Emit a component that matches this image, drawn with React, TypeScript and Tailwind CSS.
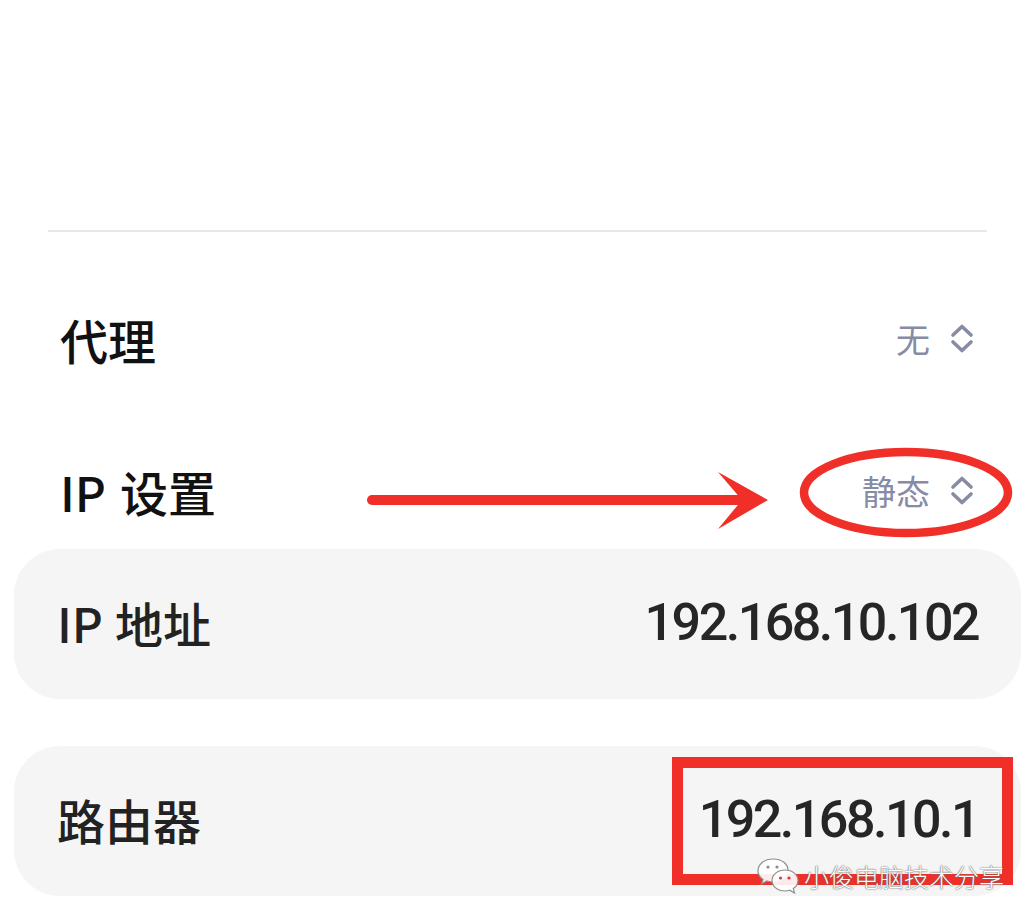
import React from "react";

const cjk = "font-['Noto_Sans_CJK_SC','Noto_Sans',sans-serif]";

function UpDown() {
  return (
    <svg width="24" height="30" viewBox="0 0 24 30" fill="none" className="shrink-0">
      <path d="M3 11 L12 2.5 L21 11" stroke="#878ba4" strokeWidth="3.6" strokeLinecap="round" strokeLinejoin="round" />
      <path d="M3 18 L12 26.5 L21 18" stroke="#878ba4" strokeWidth="3.6" strokeLinecap="round" strokeLinejoin="round" />
    </svg>
  );
}

function SelectRow({ label, value }: { label: React.ReactNode; value: string }) {
  return (
    <div className="flex h-[80px] items-center justify-between pl-[60px] pr-[61px]">
      <div className={`${cjk} text-[48px] font-medium leading-none text-[#111111]`}>{label}</div>
      <div className="flex items-center gap-[20px]">
        <span className={`${cjk} text-[34px] leading-none text-[#878ba4]`}>{value}</span>
        <UpDown />
      </div>
    </div>
  );
}

function Card({ label, value }: { label: React.ReactNode; value: string }) {
  return (
    <div className="mx-[14px] flex h-[150px] items-center justify-between rounded-[46px] bg-[#f5f5f5] pl-[43px] pr-[43px]">
      <div className={`${cjk} -mt-[4px] text-[48px] font-medium leading-none text-[#222222]`}>{label}</div>
      <div className="-mt-[2px] font-['Roboto','Noto_Sans',sans-serif] text-[52px] font-medium leading-none tracking-[-2.5px] text-[#262626]">
        {value}
      </div>
    </div>
  );
}

function WeChatIcon() {
  return (
    <svg width="46" height="40" viewBox="0 0 46 40" fill="none">
      <g stroke="#8d8d8d" strokeWidth="1.2" fill="rgba(255,255,255,0.9)">
        <path d="M17 3 C8 3 2 8.5 2 15 C2 18.5 4 21.5 7 23.5 L5.5 28 L11 25 C13 25.7 15 26 17 26 C26 26 32 20.5 32 14.5 C32 8 26 3 17 3 Z" />
        <path d="M29 14 C21.5 14 16 18.8 16 24.5 C16 30.2 21.5 35 29 35 C30.7 35 32.3 34.7 33.8 34.2 L38.5 37 L37.3 32.6 C40.2 30.7 42 27.8 42 24.5 C42 18.8 36.5 14 29 14 Z" />
      </g>
      <circle cx="12" cy="11" r="1.6" fill="#8d8d8d" />
      <circle cx="21" cy="11" r="1.6" fill="#8d8d8d" />
      <circle cx="24.5" cy="22" r="1.6" fill="#c94040" />
      <circle cx="33" cy="22" r="1.6" fill="#c94040" />
    </svg>
  );
}

export default function App() {
  return (
    <div className="relative h-[923px] w-[1035px] overflow-hidden bg-white">
      <div className="h-[230px]" />
      <div className="mx-[48px] h-[1.5px] bg-[#e8e8e8]" />

      <div className="mt-[67px]">
        <SelectRow label="代理" value="无" />
      </div>
      <div className="mt-[72px]">
        <SelectRow
          label={
            <span>
              IP<span className="inline-block w-[14px]" />设置
            </span>
          }
          value="静态"
        />
      </div>

      <div className="mt-[18px]">
        <Card
          label={
            <span>
              IP<span className="inline-block w-[12px]" />地址
            </span>
          }
          value="192.168.10.102"
        />
      </div>
      <div className="mt-[47px]">
        <Card label="路由器" value="192.168.10.1" />
      </div>

      {/* annotations */}
      <svg className="pointer-events-none absolute left-0 top-0" width="1035" height="923" viewBox="0 0 1035 923">
        <line x1="372" y1="500" x2="745" y2="500" stroke="#ef2f28" strokeWidth="10" strokeLinecap="round" />
        <path d="M718 472 L768 500 L718 529 L742 500 Z" fill="#ef2f28" />
        <ellipse cx="906" cy="492.5" rx="102" ry="40.5" stroke="#ef2f28" strokeWidth="8.5" fill="none" />
        <rect x="677.5" y="762.5" width="330" height="117" stroke="#ef2f28" strokeWidth="11" fill="none" />
      </svg>

      <div className="absolute left-[756px] top-[856px] flex items-center gap-[2px]">
        <WeChatIcon />
        <span
          className={`${cjk} text-[25px] font-light leading-none text-white [text-shadow:0_0_1px_#555,0_0_2px_#777]`}
        >
          小俊电脑技术分享
        </span>
      </div>
    </div>
  );
}
